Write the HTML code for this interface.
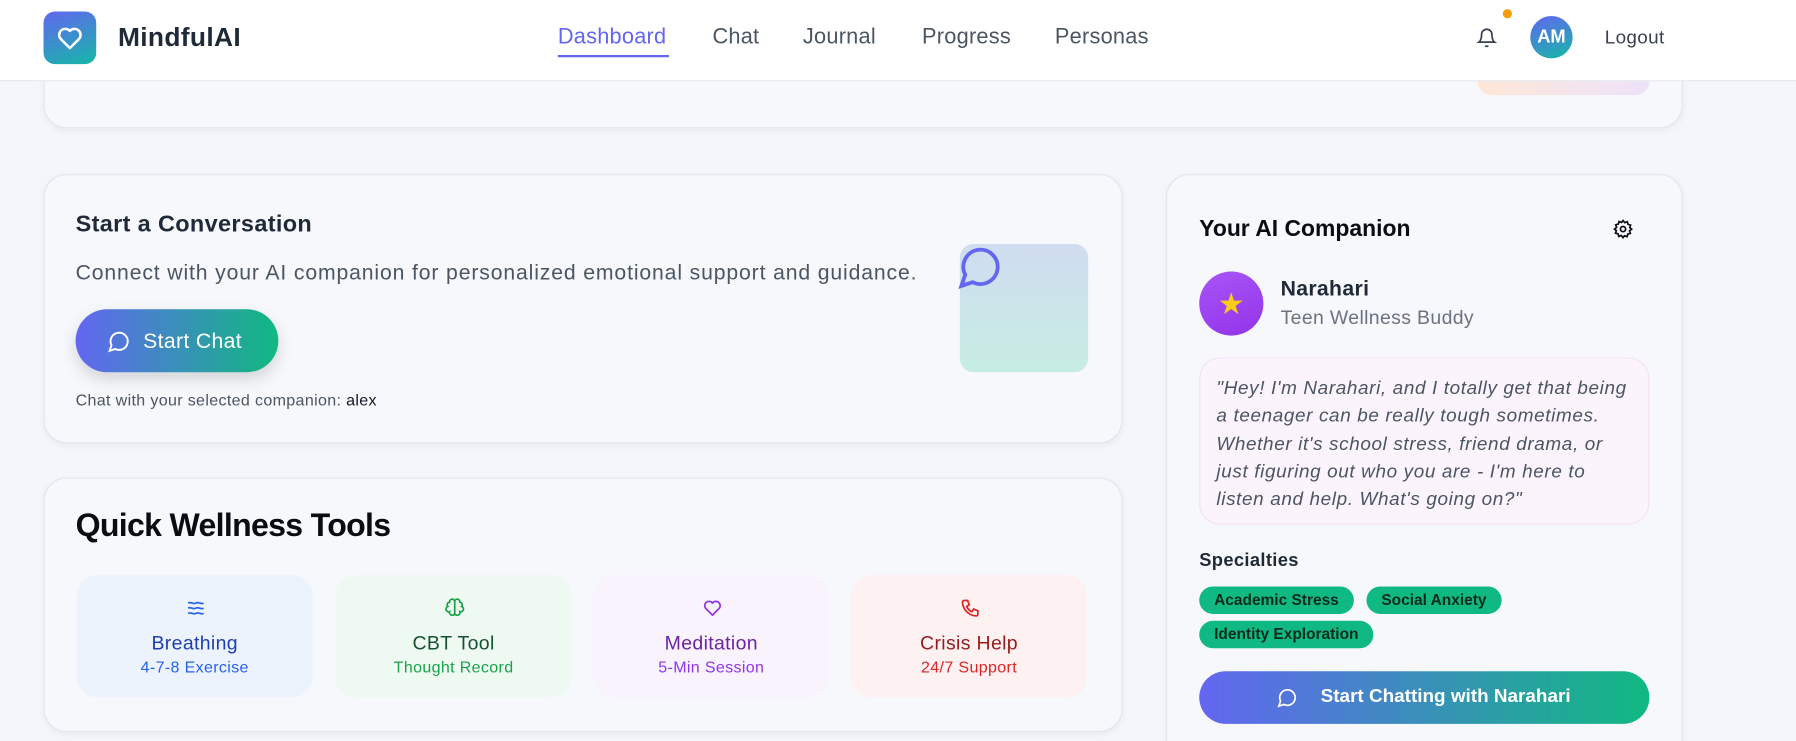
<!DOCTYPE html>
<html><head><meta charset="utf-8"><style>
*{box-sizing:border-box;margin:0;padding:0}
html,body{width:1796px;height:741px;overflow:hidden;background:#f4f6fb}
#w{width:1568px;height:647px;transform:scale(1.14541);transform-origin:0 0;position:relative;font-family:"Liberation Sans",sans-serif;background:#f4f6fb;letter-spacing:.3px}
.a{position:absolute}
.card{position:absolute;background:#f6f8fc;border:1px solid #e3e6ee;border-radius:20px;box-shadow:0 2px 6px rgba(0,0,0,.05)}
.nav{left:0;top:0;width:1568px;height:71px;background:#fff;border-bottom:1px solid #e5e7eb}
.ni{position:absolute;top:22px;font-size:19px;color:#4b5563;letter-spacing:.2px}
.tile{position:absolute;top:502px;width:206px;height:107px;border-radius:18px;text-align:center}
.tile svg{position:absolute;left:95px;top:20px}
.tile .t{position:absolute;top:50px;width:100%;font-size:17px}
.tile .s{position:absolute;top:72px;width:100%;font-size:14px}
.chip{position:absolute;top:512px;height:24px;background:#10b981;border-radius:12px;color:#0b2a1f;font-size:13.5px;font-weight:bold;line-height:24px;padding:0 13px;letter-spacing:0}
.grad{background:linear-gradient(90deg,#6366f1,#10b981)}
</style></head><body><div id="w">
<div class="card" style="left:38px;top:40px;width:1431px;height:72px;background:#f6f8fc"></div>
<div class="a" style="left:1290px;top:40px;width:150px;height:43px;border-radius:12px;background:linear-gradient(90deg,#fde7d6,#ede2fb)"></div>
<div class="a nav">
<div class="a grad" style="left:38px;top:10px;width:46px;height:46px;border-radius:10px;background:linear-gradient(160deg,#6366f1,#14b8a6)"><svg width="46" height="46" viewBox="0 0 46 46"><path d="M23 32 L15 24 A5 5 0 0 1 23 17 A5 5 0 0 1 31 24 Z" fill="none" stroke="#fff" stroke-width="2.2" stroke-linejoin="round"/></svg></div>
<div class="a" style="left:103px;top:19px;font-size:23px;font-weight:bold;color:#1f2937">MindfulAI</div>
<div class="ni" style="left:487px;color:#6366f1">Dashboard</div>
<div class="a" style="left:487px;top:48px;width:97px;height:2px;background:#6366f1"></div>
<div class="ni" style="left:622px">Chat</div>
<div class="ni" style="left:701px">Journal</div>
<div class="ni" style="left:805px">Progress</div>
<div class="ni" style="left:921px">Personas</div>
<svg class="a" style="left:1289px;top:24px" width="18" height="18" viewBox="0 0 24 24" fill="none" stroke="#374151" stroke-width="2"><path d="M6 8a6 6 0 0 1 12 0c0 7 3 9 3 9H3s3-2 3-9M10.3 21a1.9 1.9 0 0 0 3.4 0"/></svg>
<div class="a" style="left:1312px;top:8px;width:8px;height:8px;border-radius:50%;background:#f59e0b"></div>
<div class="a" style="left:1336px;top:14px;width:37px;height:37px;border-radius:50%;background:linear-gradient(160deg,#6366f1,#14b8a6);color:#fff;font-weight:bold;font-size:16px;text-align:center;line-height:37px;letter-spacing:0">AM</div>
<div class="a" style="left:1401px;top:24px;font-size:16.5px;color:#374151">Logout</div>
</div>

<div class="card" style="left:38px;top:152px;width:942px;height:235px"></div>
<div class="a" style="left:66px;top:184px;font-size:20.5px;font-weight:bold;color:#1f2937">Start a Conversation</div>
<div class="a" style="left:66px;top:227px;font-size:18.5px;color:#4b5563;letter-spacing:.75px">Connect with your AI companion for personalized emotional support and guidance.</div>
<div class="a grad" style="left:66px;top:270px;width:177px;height:55px;border-radius:28px;box-shadow:0 6px 14px rgba(0,0,0,.15)">
<svg class="a" style="left:28px;top:18px" width="20" height="20" viewBox="0 0 24 24" fill="none" stroke="#fff" stroke-width="2"><path d="M7.9 20A9 9 0 1 0 4 16.1L2 22Z"/></svg>
<div class="a" style="left:59px;top:17px;font-size:18.5px;color:#fff">Start Chat</div></div>
<div class="a" style="left:66px;top:341px;font-size:14px;color:#4b5563">Chat with your selected companion: <span style="color:#111827">alex</span></div>
<div class="a" style="left:838px;top:213px;width:112px;height:112px;border-radius:12px;background:linear-gradient(180deg,#d0dcf0,#c6ede3)"></div>
<svg class="a" style="left:836px;top:213px" width="40" height="40" viewBox="0 0 24 24" fill="none" stroke="#6366f1" stroke-width="2"><path d="M7.9 20A9 9 0 1 0 4 16.1L2 22Z"/></svg>

<div class="card" style="left:38px;top:417px;width:942px;height:222px"></div>
<div class="a" style="left:66px;top:443px;font-size:28px;font-weight:bold;color:#0b0b12;letter-spacing:-.6px">Quick Wellness Tools</div>
<div class="tile" style="left:67px;background:#edf3fd;color:#1e40af"><svg width="18" height="18" viewBox="0 0 24 24" fill="none" stroke="#2563eb" stroke-width="2"><path d="M3 6c3-2 6 2 9 0s6 2 9 0M3 12c3-2 6 2 9 0s6 2 9 0M3 18c3-2 6 2 9 0s6 2 9 0"/></svg><div class="t">Breathing</div><div class="s" style="color:#2563eb">4-7-8 Exercise</div></div>
<div class="tile" style="left:293px;background:#eef9f2;color:#14532d"><svg width="18" height="18" viewBox="0 0 24 24" fill="none" stroke="#16a34a" stroke-width="2"><path d="M12 4a3 3 0 0 0-6 1 3 3 0 0 0-2 5 3 3 0 0 0 2 6 3 3 0 0 0 6 2V4a3 3 0 0 1 6 1 3 3 0 0 1 2 5 3 3 0 0 1-2 6 3 3 0 0 1-6 2"/></svg><div class="t">CBT Tool</div><div class="s" style="color:#16a34a">Thought Record</div></div>
<div class="tile" style="left:518px;background:#f8f3fc;color:#6b21a8"><svg width="18" height="18" viewBox="0 0 24 24" fill="none" stroke="#9333ea" stroke-width="2"><path d="M12 20 L4 12 A4.5 4.5 0 0 1 12 6 A4.5 4.5 0 0 1 20 12 Z" stroke-linejoin="round"/></svg><div class="t">Meditation</div><div class="s" style="color:#9333ea">5-Min Session</div></div>
<div class="tile" style="left:743px;background:#fdf1f1;color:#991b1b"><svg width="18" height="18" viewBox="0 0 24 24" fill="none" stroke="#dc2626" stroke-width="2"><path d="M5 3h4l2 5-3 2a11 11 0 0 0 6 6l2-3 5 2v4a2 2 0 0 1-2 2A17 17 0 0 1 3 5a2 2 0 0 1 2-2Z"/></svg><div class="t">Crisis Help</div><div class="s" style="color:#dc2626">24/7 Support</div></div>

<div class="card" style="left:1018px;top:152px;width:451px;height:520px"></div>
<div class="a" style="left:1047px;top:189px;font-size:20px;font-weight:bold;color:#0b0b12;letter-spacing:0">Your AI Companion</div>
<svg class="a" style="left:1408px;top:191px" width="18" height="18" viewBox="0 0 24 24" fill="none" stroke="#111" stroke-width="2"><circle cx="12" cy="12" r="3"/><path d="M12 2l2 2.5 3-1 .8 3 3 .8-1 3L22 12l-2.5 2 1 3-3 .8-.8 3-3-1L12 22l-2-2.5-3 1-.8-3-3-.8 1-3L2 12l2.5-2-1-3 3-.8.8-3 3 1Z"/></svg>
<div class="a" style="left:1047px;top:237px;width:56px;height:56px;border-radius:50%;background:linear-gradient(160deg,#a855f7,#9333ea);text-align:center;line-height:56px;font-size:26px;color:#facc15">★</div>
<div class="a" style="left:1118px;top:241px;font-size:18.5px;font-weight:bold;color:#1f2937">Narahari</div>
<div class="a" style="left:1118px;top:268px;font-size:17px;color:#6b7280">Teen Wellness Buddy</div>
<div class="a" style="left:1047px;top:312px;width:393px;height:146px;border-radius:18px;background:#fbf4fc;border:1px solid #f3e2f5;padding:14px 12px 0 14px;font-size:16.5px;font-style:italic;line-height:24.3px;color:#4b5563;letter-spacing:.55px">"Hey! I'm Narahari, and I totally get that being a teenager can be really tough sometimes. Whether it's school stress, friend drama, or just figuring out who you are - I'm here to listen and help. What's going on?"</div>
<div class="a" style="left:1047px;top:481px;font-size:16px;font-weight:bold;color:#1f2937">Specialties</div>
<div class="chip" style="left:1047px">Academic Stress</div>
<div class="chip" style="left:1193px">Social Anxiety</div>
<div class="chip" style="left:1047px;top:542px">Identity Exploration</div>
<div class="a grad" style="left:1047px;top:586px;width:393px;height:46px;border-radius:23px">
<svg class="a" style="left:68px;top:14px" width="18" height="18" viewBox="0 0 24 24" fill="none" stroke="#fff" stroke-width="2"><path d="M7.9 20A9 9 0 1 0 4 16.1L2 22Z"/></svg>
<div class="a" style="left:106px;top:13px;font-size:16.5px;font-weight:bold;color:#fff;letter-spacing:0">Start Chatting with Narahari</div></div>
</div></body></html>
